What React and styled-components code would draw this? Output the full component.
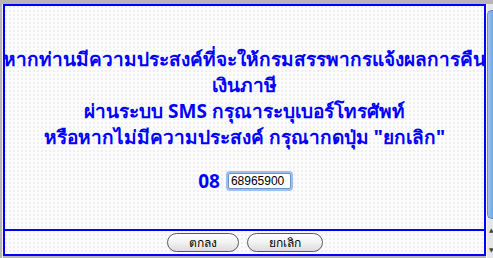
import React from 'react';
import styled, { createGlobalStyle } from 'styled-components';

const GlobalStyle = createGlobalStyle`
  html, body {
    margin: 0;
    padding: 0;
    background: #b6b6b6;
  }

  body {
    width: 493px;
    height: 258px;
    overflow: hidden;
    font-family: 'Noto Sans', 'DejaVu Sans', sans-serif;
  }
`;

const Frame = styled.div`
  display: flex;
  height: 258px;
  padding-top: 4px;
  box-sizing: border-box;
  background: #b6b6b6;
`;

const Gutter = styled.div`
  width: 3px;
  border-right: 1px solid #f2f2f2;
  background: #b6b6b6;
`;

const Dialog = styled.div`
  width: 483px;
  height: 252px;
  box-sizing: border-box;
  border: 2px solid #0000ff;
  display: flex;
  flex-direction: column;
  background-color: #fcfcfc;
  background-image:
    linear-gradient(90deg, transparent 2px, #fcfcfc 2px),
    linear-gradient(#efefef 2px, #fcfcfc 2px);
  background-size: 4px 4px;
`;

const Message = styled.div`
  flex: 1;
  display: flex;
  flex-direction: column;
  align-items: center;
  padding-top: 40px;
  color: #0000ff;
  font-weight: bold;
  font-size: 19px;
  line-height: 26px;
  text-align: center;
`;

const Line = styled.div`
  white-space: nowrap;
`;

const InputRow = styled.div`
  display: flex;
  align-items: center;
  gap: 8px;
  margin-top: 21px;
`;

const Prefix = styled.span`
  font-size: 19px;
  line-height: 20px;
`;

const PhoneInput = styled.input`
  width: 63px;
  height: 16px;
  box-sizing: border-box;
  padding: 0 2px;
  border: 1px solid #6f93c9;
  border-radius: 2px;
  box-shadow: 0 0 0 2px #9cc0f0;
  background: #fff;
  color: #000;
  font-family: 'Liberation Sans', Arial, sans-serif;
  font-size: 12px;
  outline: none;
`;

const ButtonBar = styled.div`
  height: 23px;
  border-top: 2px solid #0000ff;
  display: flex;
  justify-content: center;
  align-items: center;
  gap: 8px;
`;

const PillButton = styled.button`
  width: ${(p) => p.$w}px;
  height: 19px;
  padding: 0;
  border: 1px solid #5a5a5a;
  border-radius: 10px;
  background: linear-gradient(#ffffff, #f2f2f2 50%, #dcdcdc);
  color: #000;
  font-family: 'Noto Sans', 'DejaVu Sans', sans-serif;
  font-size: 12px;
  font-weight: 500;
  line-height: 17px;
`;

const ScrollStrip = styled.div`
  flex: 1;
  display: flex;
  flex-direction: column;
  align-items: flex-end;
  padding-top: 6px;
  background: #e6e6e6;
  border-left: 1px solid #fafafa;
`;

const Thumb = styled.div`
  width: 5px;
  height: 207px;
  border: 1px solid #5b8fcf;
  border-right: none;
  border-radius: 5px 0 0 5px;
  background: linear-gradient(90deg, #9ec3ef, #6ea4e4);
`;

const Arrow = styled.div`
  margin-top: ${(p) => p.$top}px;
  width: 4px;
  color: #444;
  font-size: 6px;
  line-height: 6px;
`;

export default function App() {
  return (
    <>
      <GlobalStyle />
      <Frame>
        <Gutter />
        <Dialog>
          <Message>
            <Line>หากท่านมีความประสงค์ที่จะให้กรมสรรพากรแจ้งผลการคืน</Line>
            <Line>เงินภาษี</Line>
            <Line>ผ่านระบบ SMS กรุณาระบุเบอร์โทรศัพท์</Line>
            <Line>หรือหากไม่มีความประสงค์ กรุณากดปุ่ม "ยกเลิก"</Line>
            <InputRow>
              <Prefix>08</Prefix>
              <PhoneInput defaultValue="68965900" />
            </InputRow>
          </Message>
          <ButtonBar>
            <PillButton $w={72}>ตกลง</PillButton>
            <PillButton $w={76}>ยกเลิก</PillButton>
          </ButtonBar>
        </Dialog>
        <ScrollStrip>
          <Thumb />
          <Arrow $top={8}>▲</Arrow>
          <Arrow $top={14}>▼</Arrow>
        </ScrollStrip>
      </Frame>
    </>
  );
}
